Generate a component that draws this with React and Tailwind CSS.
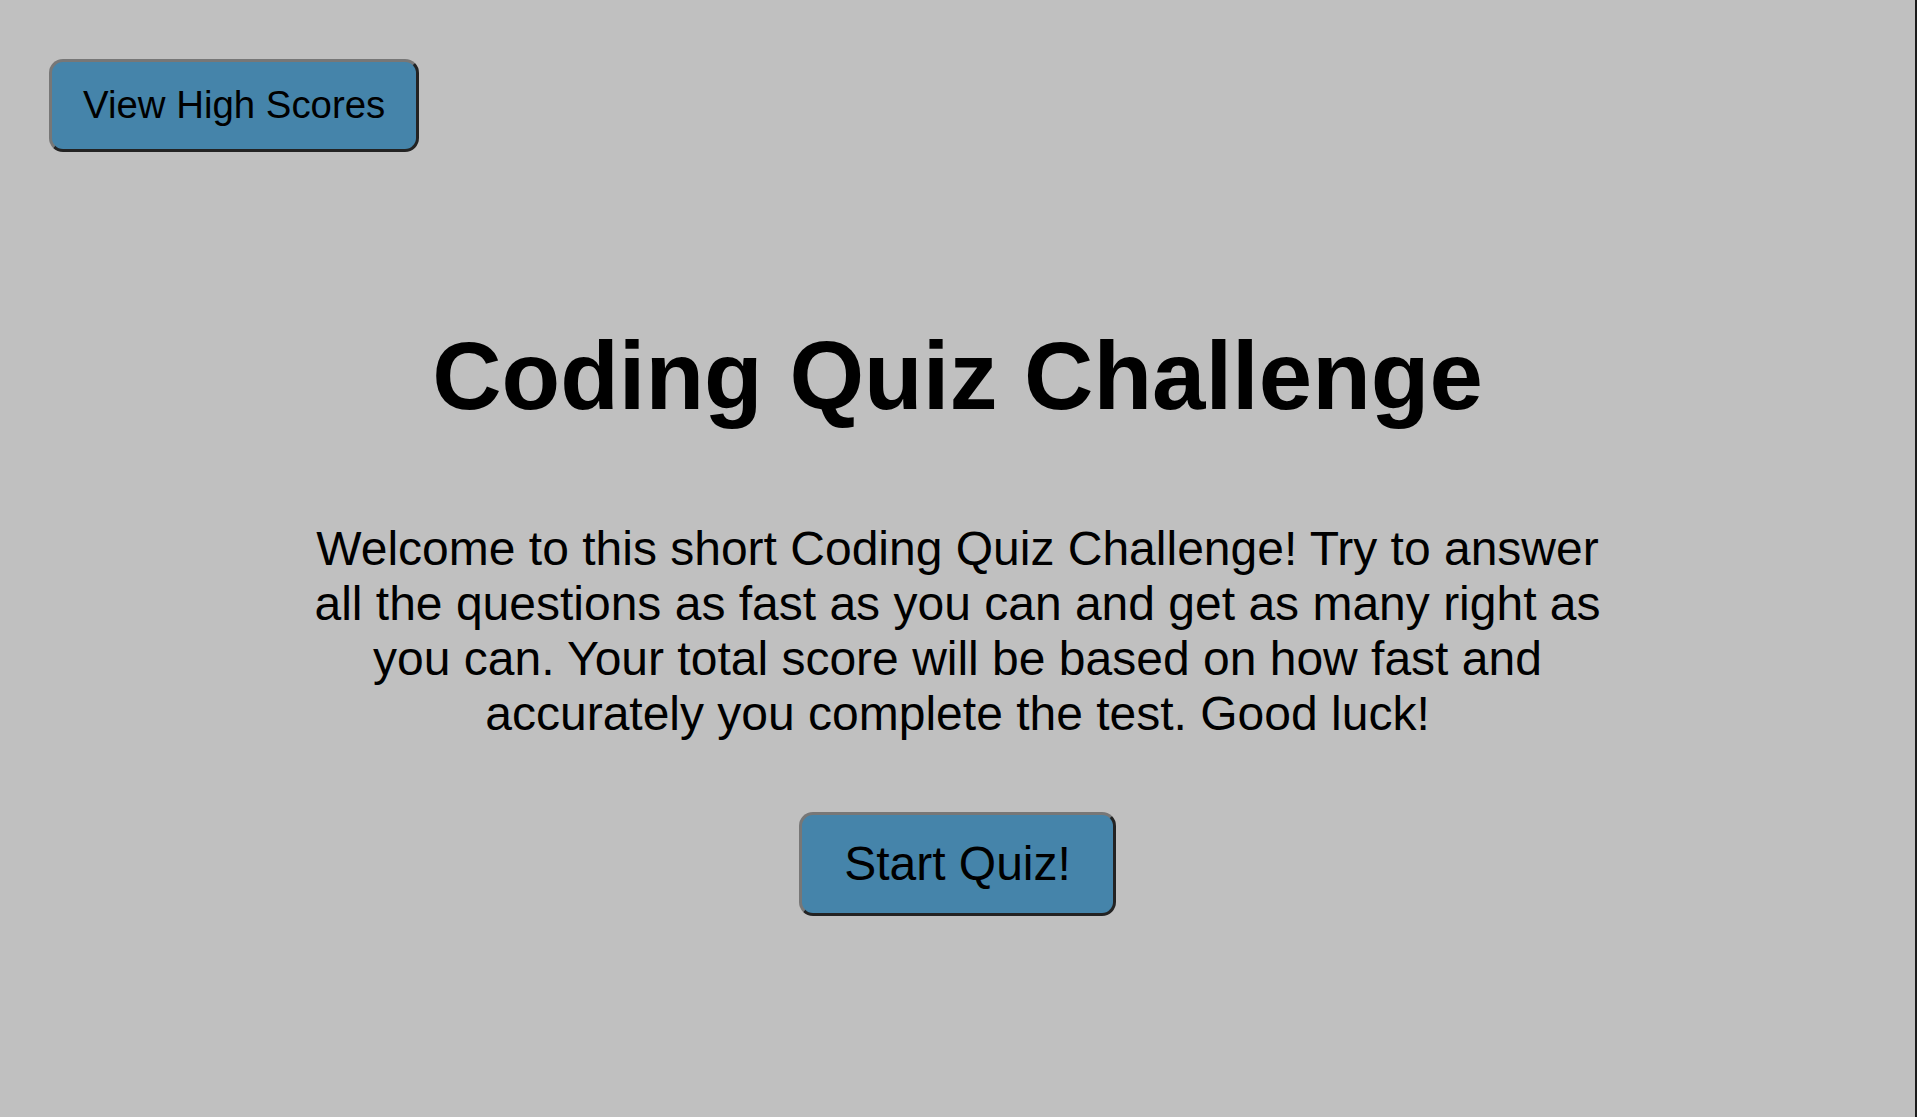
export default function App() {
  const btn =
    "rounded-[14px] border-[3px] border-t-[#777777] border-l-[#777777] border-b-[#232323] border-r-[#232323] bg-[#4584aa] text-black leading-[1.15]";
  return (
    <div
      className="min-h-screen w-full flex bg-[#c0c0c0] text-black"
      style={{ fontFamily: '"Liberation Sans", Arial, sans-serif' }}
    >
      <div className="flex-1 flex flex-col">
        <div className="pt-[59px] pl-[49px]">
          <button className={`${btn} text-[38.4px] px-[31px] pt-[21px] pb-[22px]`}>
            View High Scores
          </button>
        </div>
        <h1 className="mt-[169px] text-center text-[96px] font-bold leading-[1.15]">
          Coding Quiz Challenge
        </h1>
        <p className="mt-[89px] mx-auto w-[1310px] text-center text-[48px] leading-[1.15]">
          Welcome to this short Coding Quiz Challenge! Try to answer all the
          questions as fast as you can and get as many right as you can. Your
          total score will be based on how fast and accurately you complete the
          test. Good luck!
        </p>
        <div className="mt-[71px] flex justify-center">
          <button className={`${btn} text-[48px] px-[42px] pt-[21px] pb-[22px]`}>
            Start Quiz!
          </button>
        </div>
      </div>
      <div className="w-[2px] bg-[#1b1b1b]" />
    </div>
  );
}
